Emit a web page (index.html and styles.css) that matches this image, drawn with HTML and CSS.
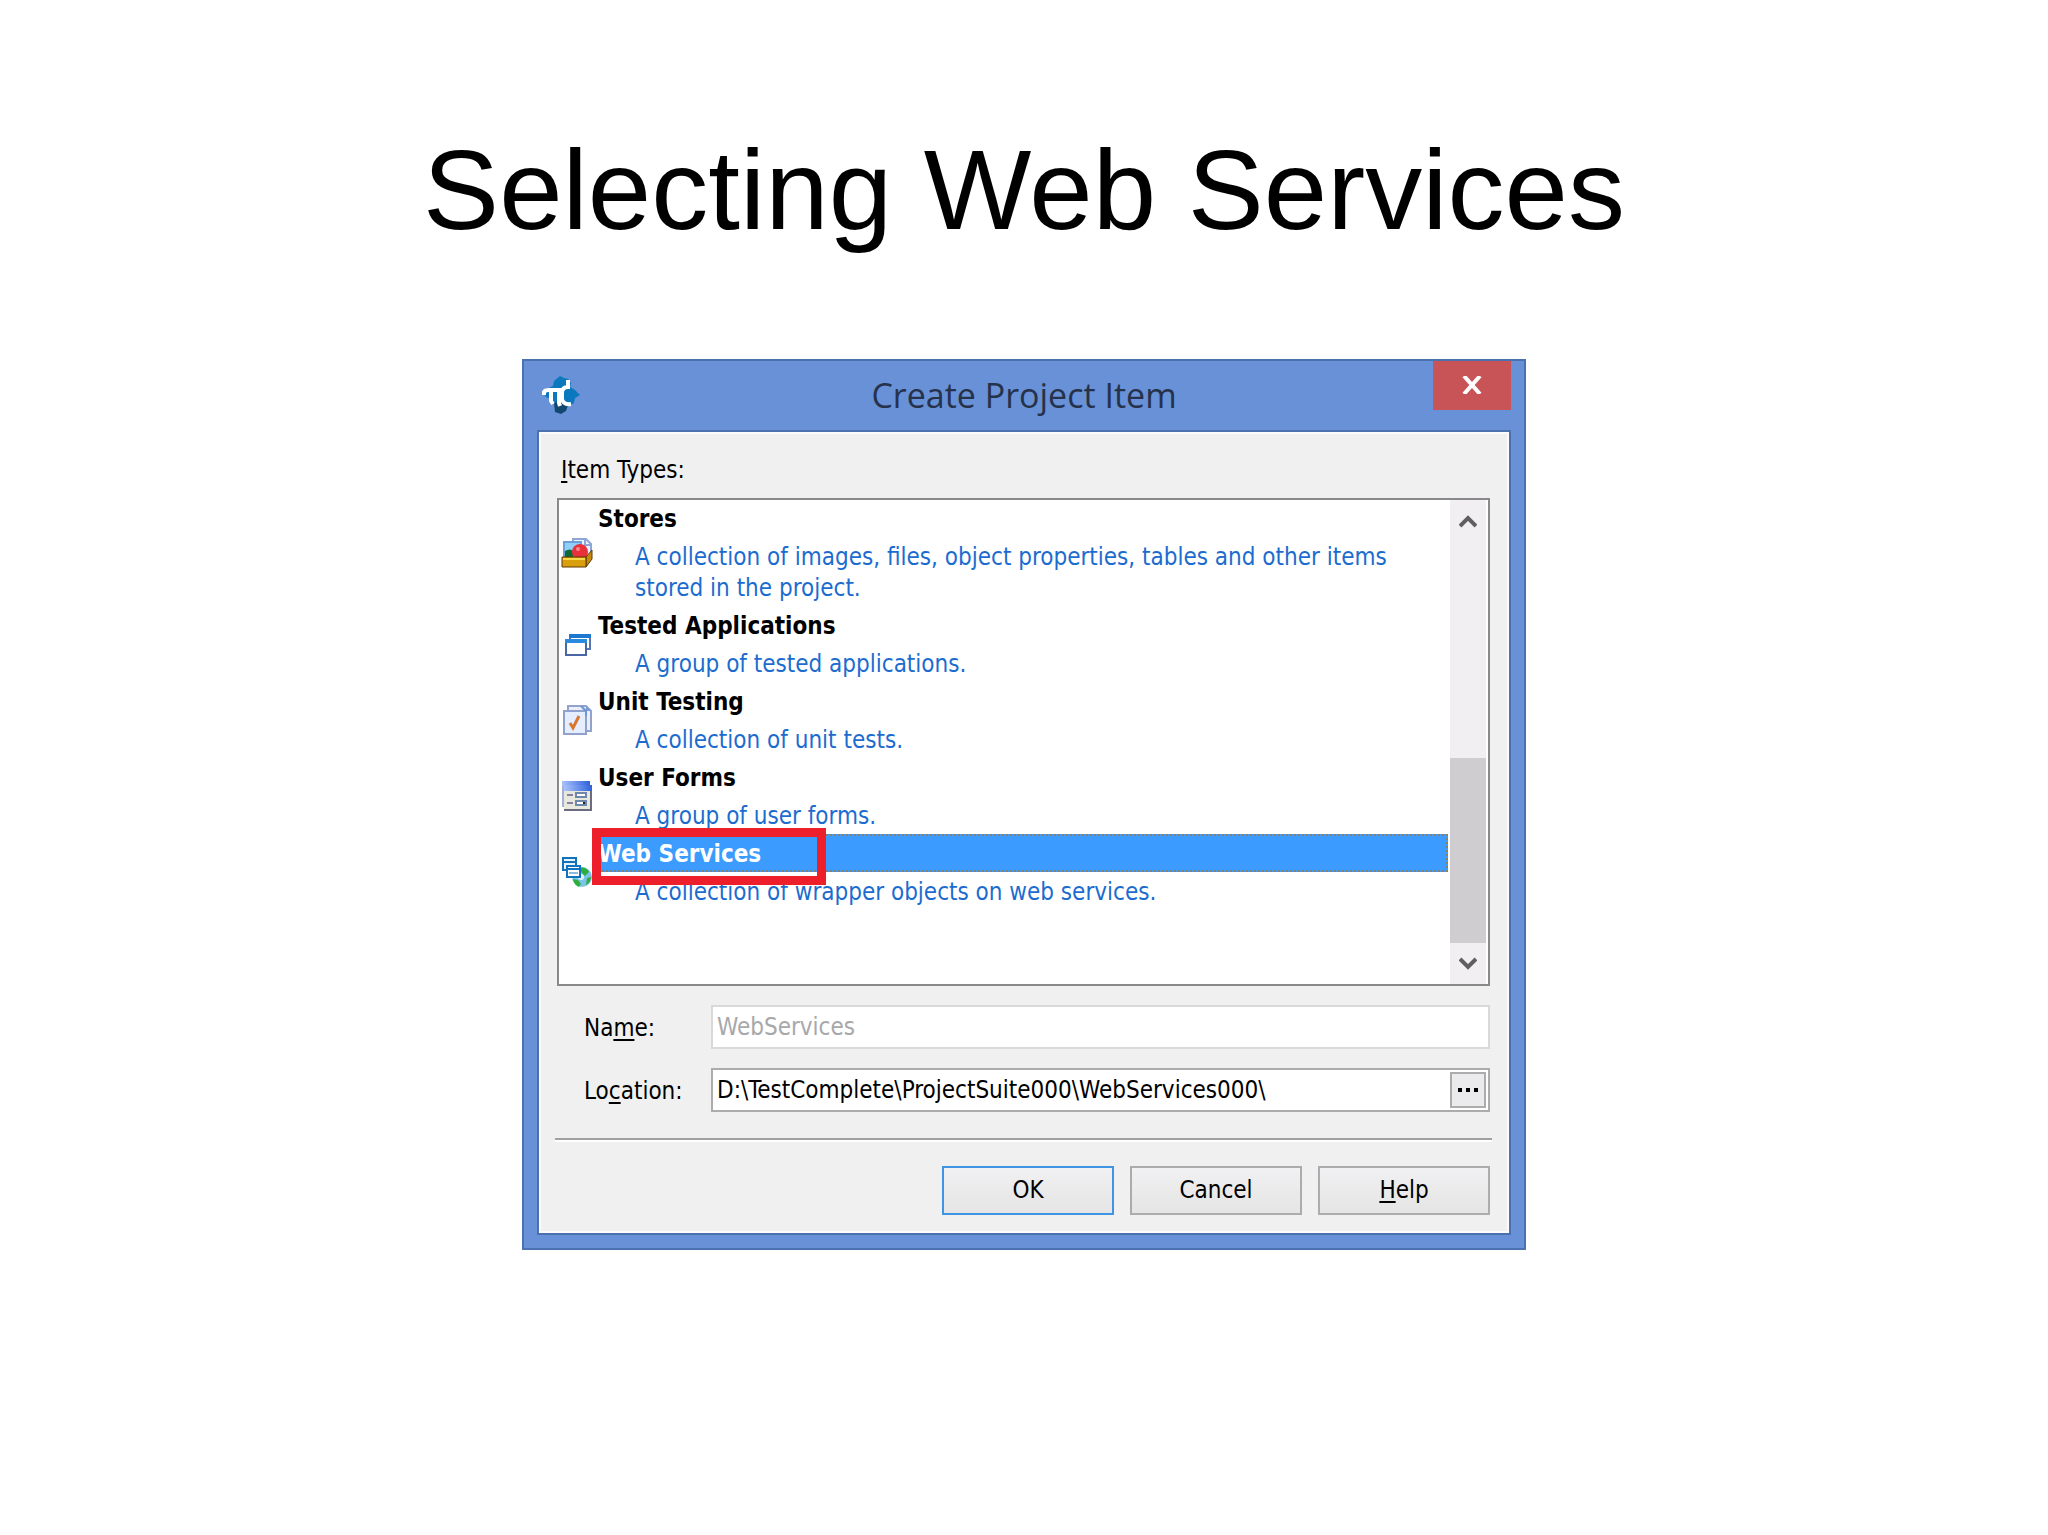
FILE: index.html
```html
<!DOCTYPE html>
<html lang="en">
<head>
  <meta charset="UTF-8">
  <title>Selecting Web Services</title>
  <link rel="stylesheet" href="styles.css">
</head>
<body>

  <h1>Selecting Web Services</h1>

  <div class="dialog" role="dialog" aria-labelledby="dialog-title">
    <div class="titlebar">
      <svg class="logo" viewBox="0 0 38 38">
        <path d="M18 0l4 2 4 1 3 4-1 4 5 3 5 5-5 3-1 5-5 3-6 1-8-2-4-6-5-2-3-4 3-4 7-3 1-5z" fill="#0a78bd"/>
        <path d="M12 27l6-3 8 5-2 6-5 3-6-2z" fill="#12486f"/>
        <path d="M2 19V16q1-2 5-2h13M9 15v10l2 3M17 15v12l1 3" fill="none" stroke="#fff" stroke-width="4"/>
        <path d="M26 4v7q-6 0-6 6v6q1 6 9 5" fill="none" stroke="#fff" stroke-width="4"/>
      </svg>
      <h2 id="dialog-title">Create Project Item</h2>
      <button type="button" class="close" aria-label="Close">
        <svg viewBox="0 0 22 18"><path d="M3 0l16 18M19 0L3 18" stroke="#fff" stroke-width="4"/></svg>
      </button>
    </div>

    <form class="content">
      <div class="list-label" id="types-label"><u>I</u>tem Types:</div>

      <div class="list-box">
        <ul class="items" role="listbox" aria-labelledby="types-label">
          <li class="item" role="option">
            <svg viewBox="0 0 32 32">
              <path d="M12 2h13l5 5v13H12z" fill="#eef4ff" stroke="#8ea6d6" stroke-width="2"/>
              <path d="M24 2v6h6" fill="none" stroke="#8ea6d6" stroke-width="2"/>
              <path d="M3 5h17v16H3z" fill="#8fd0f8" stroke="#6d9edc" stroke-width="2"/>
              <path d="M4 14q5-3 8 0v7H4z" fill="#0b6b35"/>
              <circle cx="19" cy="15" r="8" fill="#e8313b"/>
              <circle cx="17" cy="12" r="2" fill="#f98a8a"/>
              <path d="M25 20l6-7v9l-6 8z" fill="#c58a0a" stroke="#5f3b05"/>
              <path d="M1 20h24v10H1z" fill="#d99f0d" stroke="#5f3b05"/>
              <path d="M2 21h22v2H2z" fill="#f7d84a"/>
            </svg>
            <div class="item-text">
              <div class="item-name">Stores</div>
              <div class="item-info">A collection of images, files, object properties, tables and other items<br>stored in the project.</div>
            </div>
          </li>
          <li class="item" role="option">
            <svg viewBox="0 0 32 32">
              <path d="M9 8h20v13H9z" fill="#fff" stroke="#5a75b4" stroke-width="2"/>
              <path d="M8 6h22v4H8z" fill="#1c79cf"/>
              <path d="M5 12h20v15H5z" fill="#fff" stroke="#4b66a5" stroke-width="2"/>
              <path d="M4 11h22v4H4z" fill="#2a8ae0"/>
            </svg>
            <div class="item-text">
              <div class="item-name">Tested Applications</div>
              <div class="item-info">A group of tested applications.</div>
            </div>
          </li>
          <li class="item" role="option">
            <svg viewBox="0 0 32 32">
              <path d="M7 2h18l5 5v20H7z" fill="#e9effb" stroke="#92a4ce" stroke-width="2"/>
              <path d="M25 2v5h5z" fill="#7b9bd8"/>
              <path d="M3 7h22v23H3z" fill="#e4eefe" stroke="#92a0cc" stroke-width="2"/>
              <path d="M20 2l5 5v5" fill="none" stroke="#6f95d6" stroke-width="2"/>
              <path d="M9 19l3 5 6-12" fill="none" stroke="#d9772f" stroke-width="3"/>
            </svg>
            <div class="item-text">
              <div class="item-name">Unit Testing</div>
              <div class="item-info">A collection of unit tests.</div>
            </div>
          </li>
          <li class="item" role="option">
            <svg viewBox="0 0 32 32">
              <defs>
                <linearGradient id="form-title">
                  <stop offset="0" stop-color="#a9c2fb"/>
                  <stop offset="1" stop-color="#2f62da"/>
                </linearGradient>
              </defs>
              <path d="M1 1h28v26H1z" fill="#a3b0d8"/>
              <path d="M1 1h28v5H1z" fill="url(#form-title)"/>
              <path d="M3 5h28v26H3z" fill="#e9e8dc"/>
              <path d="M3 5h28v6H3z" fill="url(#form-title)"/>
              <path d="M3 30h28M30 11v20" fill="none" stroke="#6b6c80" stroke-width="2"/>
              <path d="M6 15h6M6 23h6" stroke="#8480a8" stroke-width="2"/>
              <path d="M15 13h10v4H15zM15 21h10v4H15z" fill="#fff" stroke="#6e87ad" stroke-width="2"/>
              <path d="M22 22h2v2h-2z" fill="#222"/>
            </svg>
            <div class="item-text">
              <div class="item-name">User Forms</div>
              <div class="item-info">A group of user forms.</div>
            </div>
          </li>
          <li class="item selected" role="option" aria-selected="true">
            <svg viewBox="0 0 32 32">
              <circle cx="21" cy="21" r="10" fill="#7cc4ea"/>
              <path d="M18 12q7-2 10 4l-4 4-3-3zM12 23l5 1 3 4-2 3q-5-2-6-8zM26 22l4-1q0 5-5 8z" fill="#2fae3c"/>
              <circle cx="20" cy="21" r="3" fill="#dff3fb"/>
              <path d="M2 2h13v12H2z" fill="#e8f3fc" stroke="#1173bb" stroke-width="2"/>
              <path d="M2 6h13" stroke="#1173bb" stroke-width="2"/>
              <path d="M6 10h13v11H6z" fill="#fff" stroke="#1173bb" stroke-width="2"/>
              <path d="M6 13h13" stroke="#1173bb" stroke-width="2"/>
              <path d="M8 17h9" stroke="#8fb9dc" stroke-width="2"/>
            </svg>
            <div class="item-text">
              <div class="item-name">Web Services</div>
              <div class="item-info">A collection of wrapper objects on web services.</div>
            </div>
            <div class="highlight"></div>
          </li>
        </ul>
        <div class="scrollbar">
          <button type="button" aria-label="Scroll up">
            <svg viewBox="0 0 18 14"><path d="M1 12l8-8 8 8" fill="none" stroke="#5f5f61" stroke-width="4"/></svg>
          </button>
          <div class="track"><div class="thumb"></div></div>
          <button type="button" aria-label="Scroll down">
            <svg viewBox="0 0 18 14"><path d="M1 2l8 8 8-8" fill="none" stroke="#5f5f61" stroke-width="4"/></svg>
          </button>
        </div>
      </div>

      <div class="field">
        <label for="name">Na<u>m</u>e:</label>
        <div class="field-box disabled">
          <input type="text" id="name" name="name" value="WebServices" disabled>
        </div>
      </div>

      <div class="field">
        <label for="location">Lo<u>c</u>ation:</label>
        <div class="field-box">
          <input type="text" id="location" name="location" value="D:\TestComplete\ProjectSuite000\WebServices000\">
          <button type="button" class="browse" aria-label="Browse">
            <svg viewBox="0 0 20 4"><path d="M0 0h4v4H0zM8 0h4v4H8zM16 0h4v4h-4z"/></svg>
          </button>
        </div>
      </div>

      <hr>

      <div class="buttons">
        <button type="submit" class="default">OK</button>
        <button type="button">Cancel</button>
        <button type="button"><u>H</u>elp</button>
      </div>
    </form>
  </div>

</body>
</html>
```

FILE: styles.css
```css
* {
  box-sizing: border-box;
}
body {
  margin: 0;
  padding-top: 124px;
  background-color: #fff;
  color: #000;
  font-family: "DejaVu Sans Condensed", "DejaVu Sans", sans-serif;
  font-size: 24px;
}
h1 {
  margin: 0 0 103px;
  font-family: "Liberation Sans", Arial, sans-serif;
  font-size: 114px;
  font-weight: normal;
  line-height: 132px;
  text-align: center;
}
button, input {
  font: inherit;
  color: inherit;
}
u {
  text-underline-offset: 3px;
  text-decoration-thickness: 2px;
  text-decoration-skip-ink: none;
}

/* window frame */
.dialog {
  width: 96%;
  max-width: 1004px;
  margin: 0 auto;
  padding: 0 13px 13px;
  border: 2px solid #4b71ae;
  background-color: #6891d8;
}
.titlebar {
  display: grid;
  grid-template-columns: 78px 1fr 78px;
  height: 69px;
}
.logo {
  width: 38px;
  height: 38px;
  margin: 15px 0 0 5px;
}
h2 {
  margin: 0;
  font-family: "Open Sans", "Noto Sans", sans-serif;
  font-size: 34px;
  font-weight: normal;
  line-height: 69px;
  text-align: center;
  color: #26324a;
}
.close {
  height: 49px;
  padding: 0;
  border: none;
  background-color: #c95457;
}
.close svg {
  width: 22px;
  height: 18px;
}
.content {
  padding: 22px 19px 18px 18px;
  border: 2px solid #4b71ae;
  box-shadow: inset 0 0 0 2px #fbfbfd;
  background-color: #f0f0f1;
}
.list-label {
  padding: 1px 4px 13px;
  line-height: 30px;
}

/* item list */
.list-box {
  display: flex;
  min-height: 488px;
  padding-right: 2px;
  border: 2px solid #89898b;
  background-color: #fff;
}
.items {
  flex: 1;
  margin: -1px 0 0;
  padding: 0;
  list-style: none;
}
.item {
  position: relative;
  display: flex;
  align-items: center;
  padding-left: 2px;
}
.item svg {
  width: 32px;
  height: 32px;
}
.item-text {
  flex: 1;
  padding: 0 2px 2px;
}
.item-name {
  height: 38px;
  padding: 2px 0 0 3px;
  font-weight: bold;
  line-height: 36px;
}
.item-info {
  padding: 5px 0 0 40px;
  line-height: 31px;
  color: #1c6ccf;
}
.selected .item-name {
  background-color: #3b9bff;
  color: #fff;
  outline: 2px dotted #88806a;
  outline-offset: -2px;
}
.highlight {
  position: absolute;
  top: -6px;
  left: 33px;
  width: 234px;
  height: 57px;
  border: 9px solid #ec1f2b;
}
.scrollbar {
  display: flex;
  flex-direction: column;
  width: 36px;
  background-color: #f1eff2;
}
.scrollbar button {
  height: 41px;
  padding: 0;
  border: none;
  background: none;
}
.scrollbar svg {
  display: block;
  width: 18px;
  height: 14px;
  margin: 0 auto;
}
.track {
  display: flex;
  flex: 1;
  align-items: flex-end;
}
.thumb {
  width: 100%;
  height: 46%;
  background-color: #d0cdd0;
}

/* fields */
.field {
  display: flex;
  align-items: center;
  margin-top: 19px;
}
.field label {
  width: 154px;
  padding: 2px 0 0 27px;
}
.field-box {
  display: flex;
  flex: 1;
  height: 44px;
  padding: 2px;
  border: 2px solid #acacad;
  background-color: #fff;
}
.field-box input {
  flex: 1;
  min-width: 0;
  padding: 0 2px;
  border: none;
  outline: none;
  background: none;
}
.disabled {
  border-color: #d9d9da;
}
.disabled input {
  color: #a8a8aa;
}
.browse {
  width: 36px;
  padding: 0;
  border: 2px solid #acacad;
  background-color: #ebeaec;
}
.browse svg {
  display: block;
  width: 20px;
  height: 4px;
  margin: 0 auto;
}
hr {
  height: 4px;
  margin: 26px -2px 24px;
  border: none;
  border-top: 2px solid #a0a0a1;
  background-color: #fff;
}
.buttons {
  display: flex;
  justify-content: flex-end;
  gap: 16px;
}
.buttons button {
  width: 172px;
  height: 49px;
  padding: 0 0 2px;
  border: 2px solid #acacad;
  background: linear-gradient(#f1f0f2, #e5e5e5);
}
.buttons .default {
  border-color: #3f94e4;
}
```
